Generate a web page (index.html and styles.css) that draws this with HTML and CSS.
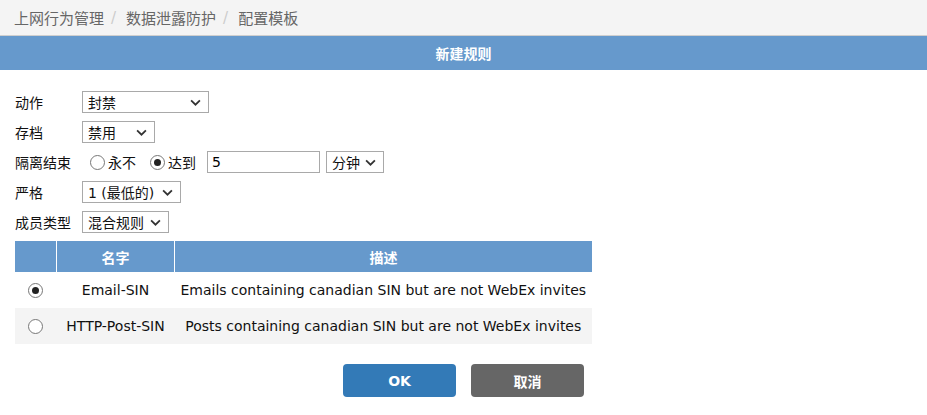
FILE: index.html
```html
<!DOCTYPE html>
<html lang="zh-CN">
<head>
  <meta charset="UTF-8">
  <title>新建规则</title>
  <link rel="stylesheet" href="styles.css">
</head>
<body>
  <div class="breadcrumb">
    <span>上网行为管理</span><span class="sep">/</span>
    <span>数据泄露防护</span><span class="sep">/</span>
    <span>配置模板</span>
  </div>

  <div class="panel-title">新建规则</div>

  <div class="content">
    <div class="form-row">
      <label class="form-label">动作</label>
      <div class="select w-action"><span>封禁</span><svg viewBox="0 0 10 6"><path d="M1 1 L5 5 L9 1" /></svg></div>
    </div>
    <div class="form-row">
      <label class="form-label">存档</label>
      <div class="select w-archive"><span>禁用</span><svg viewBox="0 0 10 6"><path d="M1 1 L5 5 L9 1" /></svg></div>
    </div>
    <div class="form-row form-row-wide">
      <label class="form-label">隔离结束</label>
      <label class="radio-label"><input type="radio" name="end" class="radio">永不</label>
      <label class="radio-label"><input type="radio" name="end" class="radio" checked>达到</label>
      <input type="text" class="text-input" value="5">
      <div class="select w-unit"><span>分钟</span><svg viewBox="0 0 10 6"><path d="M1 1 L5 5 L9 1" /></svg></div>
    </div>
    <div class="form-row">
      <label class="form-label">严格</label>
      <div class="select w-level"><span>1 (最低的)</span><svg viewBox="0 0 10 6"><path d="M1 1 L5 5 L9 1" /></svg></div>
    </div>
    <div class="form-row">
      <label class="form-label">成员类型</label>
      <div class="select w-member"><span>混合规则</span><svg viewBox="0 0 10 6"><path d="M1 1 L5 5 L9 1" /></svg></div>
    </div>

    <table class="rules">
      <thead>
        <tr><th class="col-check"></th><th class="col-name">名字</th><th>描述</th></tr>
      </thead>
      <tbody>
        <tr>
          <td><input type="radio" name="rule" class="radio" checked></td>
          <td>Email-SIN</td>
          <td>Emails containing canadian SIN but are not WebEx invites</td>
        </tr>
        <tr>
          <td><input type="radio" name="rule" class="radio"></td>
          <td>HTTP-Post-SIN</td>
          <td>Posts containing canadian SIN but are not WebEx invites</td>
        </tr>
      </tbody>
    </table>
  </div>

  <div class="actions">
    <button class="btn btn-ok">OK</button>
    <button class="btn btn-cancel">取消</button>
  </div>
</body>
</html>
```

FILE: styles.css
```css
body {
  margin: 0;
  background: #fff;
  color: #111;
  font-family: "DejaVu Sans", "Noto Sans CJK SC", sans-serif;
  font-size: 13px;
}

.breadcrumb {
  height: 35px;
  background: #f4f4f4;
  border-bottom: 1px solid #cfcfcf;
  display: flex;
  align-items: center;
  padding-left: 14px;
  font-size: 15px;
  color: #666;
}

.breadcrumb .sep {
  color: #ccc;
  padding: 0 10px 0 7px;
}

.panel-title {
  height: 34px;
  background: #6699cc;
  color: #fff;
  font-weight: bold;
  font-size: 14px;
  display: flex;
  align-items: center;
  justify-content: center;
}

.content {
  padding: 21px 15px 0 15px;
}

.form-row {
  display: flex;
  align-items: center;
  height: 22px;
  margin-bottom: 8px;
}

.form-row-wide {
  margin-top: 2px;
}

.form-label {
  width: 67px;
  font-size: 14px;
}

.select {
  height: 22px;
  box-sizing: border-box;
  border: 1px solid #a9a9a9;
  display: flex;
  align-items: center;
  justify-content: space-between;
  padding: 0 7px 0 5px;
  font-size: 14px;
  background: #fff;
}

.select svg {
  width: 11px;
  height: 7px;
  fill: none;
  stroke: #333;
  stroke-width: 1.6;
}

.w-action { width: 127px; }
.w-archive { width: 73px; }
.w-unit { width: 58px; margin-left: 6px; }
.w-level { width: 99px; }
.w-member { width: 87px; }

.radio {
  appearance: none;
  -webkit-appearance: none;
  width: 15px;
  height: 15px;
  margin: 0;
  border: 1px solid #777;
  border-radius: 50%;
  box-sizing: border-box;
  background: #fff;
  position: relative;
  vertical-align: middle;
}

.radio:checked::after {
  content: "";
  position: absolute;
  left: 3px;
  top: 3px;
  width: 7px;
  height: 7px;
  border-radius: 50%;
  background: #222;
}

.radio-label {
  display: flex;
  align-items: center;
  gap: 3px;
  font-size: 14px;
  margin-left: 8px;
  margin-right: 8px;
}

.radio-label + .radio-label {
  margin-left: 6px;
  margin-right: 11px;
}

.text-input {
  width: 113px;
  height: 22px;
  box-sizing: border-box;
  border: 1px solid #a9a9a9;
  padding: 0 4px;
  font-family: inherit;
  font-size: 14px;
  outline: none;
}

.rules {
  border-collapse: collapse;
  margin-top: 2px;
  width: 577px;
}

.rules th {
  background: #6699cc;
  color: #fff;
  font-weight: bold;
  font-size: 14px;
  height: 31px;
  padding: 0;
  border-left: 1px solid #fff;
}

.rules th.col-check {
  width: 41px;
  border-left: none;
}

.rules th.col-name {
  width: 117px;
}

.rules td {
  height: 36px;
  padding: 0 4px;
  text-align: center;
  font-size: 14px;
}

.rules td:first-child {
  padding: 0;
}

.rules tbody tr:nth-child(2) td {
  background: #f4f4f4;
}

.actions {
  display: flex;
  justify-content: center;
  gap: 15px;
  margin-top: 20px;
}

.btn {
  width: 113px;
  height: 33px;
  border: none;
  border-radius: 4px;
  color: #fff;
  font-family: inherit;
  font-weight: bold;
  font-size: 14px;
}

.btn-ok {
  background: #337ab7;
}

.btn-cancel {
  background: #666;
}
```
